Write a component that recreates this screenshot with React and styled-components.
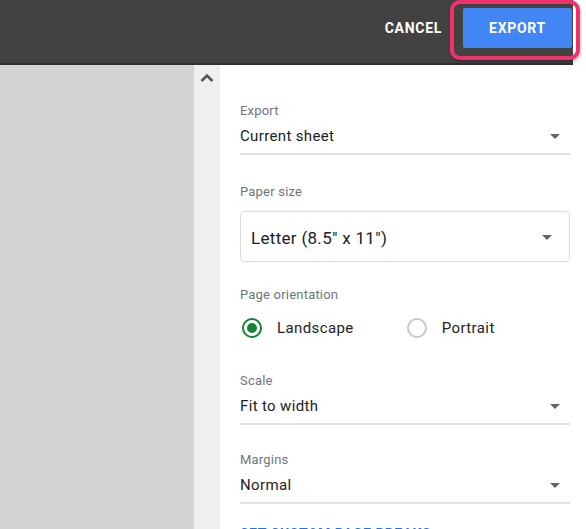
import React from "react";
import styled, { createGlobalStyle } from "styled-components";

const GlobalStyle = createGlobalStyle`
  html, body {
    margin: 0;
    padding: 0;
    background: #ffffff;
  }
  body {
    font-family: Roboto, "Liberation Sans", Arial, sans-serif;
  }
`;

const Page = styled.div`
  position: relative;
  width: 586px;
  height: 529px;
  overflow: hidden;
  background: #ffffff;
  display: flex;
  flex-direction: column;
`;

const TopBar = styled.header`
  height: 65px;
  box-sizing: border-box;
  margin-right: 13px;
  background: #424242;
  border-bottom: 2px solid #2f2f2f;
  display: flex;
  justify-content: flex-end;
  align-items: flex-start;
  padding: 8px 1px 0 0;
  gap: 6px;
`;

const BarButton = styled.button`
  height: 40px;
  border: none;
  border-radius: 2px;
  padding: 0 15px;
  font-family: Roboto, "Liberation Sans", Arial, sans-serif;
  font-size: 14px;
  font-weight: 700;
  letter-spacing: 0.7px;
  color: #ffffff;
  background: ${(p) => (p.$primary ? "#4285f4" : "transparent")};
  width: ${(p) => (p.$primary ? "109px" : "auto")};
  cursor: pointer;
`;

const Highlight = styled.div`
  position: absolute;
  left: 450px;
  top: 0;
  width: 130px;
  height: 60px;
  box-sizing: border-box;
  border: 4px solid #f2306b;
  border-radius: 10px;
  box-shadow: 1px 2px 3px rgba(0, 0, 0, 0.25);
  pointer-events: none;
`;

const Body = styled.div`
  flex: 1;
  display: grid;
  grid-template-columns: 194px 26px 1fr;
  min-height: 0;
`;

const Preview = styled.div`
  background: #d4d4d4;
`;

const ScrollStrip = styled.div`
  background: #efefef;
  display: flex;
  justify-content: center;
  padding-top: 8px;
`;

const Panel = styled.div`
  padding: 38px 16px 0 20px;
  display: flex;
  flex-direction: column;
`;

const Label = styled.div`
  font-size: 13px;
  line-height: 16px;
  letter-spacing: 0.2px;
  color: #70757a;
  margin-top: ${(p) => p.$top || 0}px;
`;

const SelectLine = styled.div`
  margin-top: 7px;
  display: flex;
  align-items: center;
  justify-content: space-between;
  padding: 0 10px 7px 0;
  border-bottom: 2px solid #e3e3e3;
  font-size: 15px;
  line-height: 20px;
  letter-spacing: 0.35px;
  color: #202124;
`;

const SelectBox = styled.div`
  margin-top: 11px;
  height: 51px;
  box-sizing: border-box;
  border: 1px solid #dadce0;
  border-radius: 4px;
  display: flex;
  align-items: center;
  justify-content: space-between;
  padding: 2px 17px 0 10px;
  font-size: 17px;
  letter-spacing: 0.3px;
  color: #202124;
`;

const Caret = styled.span`
  width: 0;
  height: 0;
  border-left: 5px solid transparent;
  border-right: 5px solid transparent;
  border-top: 5px solid #5f6368;
`;

const RadioRow = styled.div`
  margin-top: 13px;
  height: 24px;
  display: flex;
  align-items: center;
  gap: 53px;
  padding-left: 2px;
`;

const RadioOption = styled.label`
  display: flex;
  align-items: center;
  gap: 15px;
  font-size: 15px;
  letter-spacing: 0.4px;
  color: #202124;
`;

const RadioCircle = styled.span`
  width: 20px;
  height: 20px;
  box-sizing: border-box;
  border-radius: 50%;
  border: 2px solid ${(p) => (p.$on ? "#188038" : "#c6c6c6")};
  display: flex;
  align-items: center;
  justify-content: center;

  &::after {
    content: "";
    width: 10px;
    height: 10px;
    border-radius: 50%;
    background: ${(p) => (p.$on ? "#188038" : "transparent")};
  }
`;

const LinkText = styled.div`
  margin-top: 22px;
  font-size: 14px;
  line-height: 16px;
  font-weight: 700;
  letter-spacing: 0.5px;
  color: #1a73e8;
`;

function Chevron() {
  return (
    <svg width="14" height="10" viewBox="0 0 14 10">
      <path d="M1.5 8 L7 2.5 L12.5 8" fill="none" stroke="#555" strokeWidth="2.6" />
    </svg>
  );
}

export default function App() {
  return (
    <Page>
      <GlobalStyle />
      <TopBar>
        <BarButton>CANCEL</BarButton>
        <BarButton $primary>EXPORT</BarButton>
      </TopBar>
      <Highlight />
      <Body>
        <Preview />
        <ScrollStrip>
          <Chevron />
        </ScrollStrip>
        <Panel>
          <Label>Export</Label>
          <SelectLine>
            Current sheet
            <Caret />
          </SelectLine>

          <Label $top={29}>Paper size</Label>
          <SelectBox>
            Letter (8.5" x 11")
            <Caret />
          </SelectBox>

          <Label $top={25}>Page orientation</Label>
          <RadioRow>
            <RadioOption>
              <RadioCircle $on />
              Landscape
            </RadioOption>
            <RadioOption>
              <RadioCircle />
              Portrait
            </RadioOption>
          </RadioRow>

          <Label $top={33}>Scale</Label>
          <SelectLine>
            Fit to width
            <Caret />
          </SelectLine>

          <Label $top={27}>Margins</Label>
          <SelectLine>
            Normal
            <Caret />
          </SelectLine>

          <LinkText>SET CUSTOM PAGE BREAKS</LinkText>
        </Panel>
      </Body>
    </Page>
  );
}
